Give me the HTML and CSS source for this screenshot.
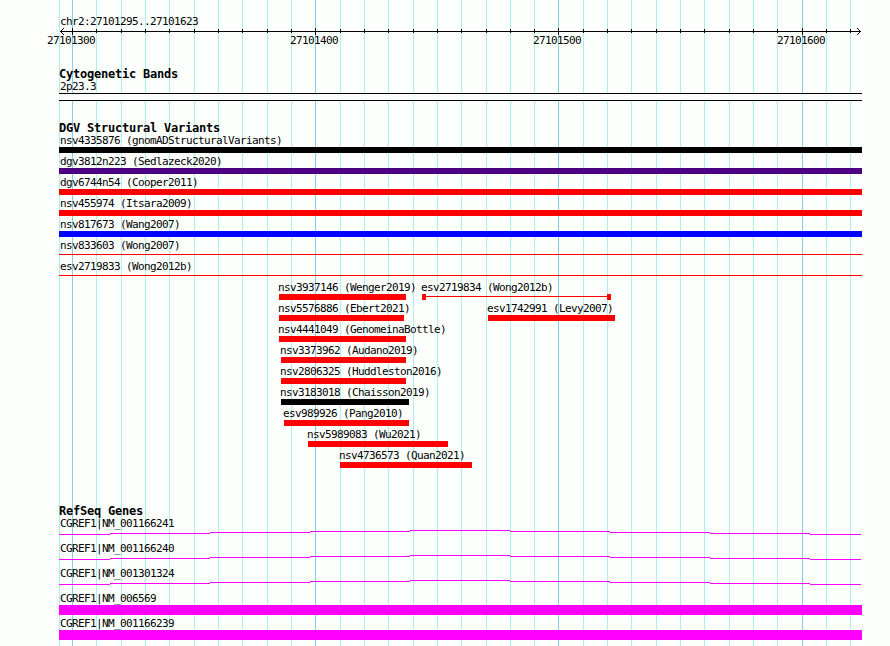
FILE: index.html
```html
<!DOCTYPE html>
<html lang="en">
<head>
<meta charset="utf-8">
<title>chr2:27101295..27101623</title>
<link rel="stylesheet" href="styles.css">
</head>
<body>
<main class="browser">
  <svg class="gridlines" width="890" height="646" aria-hidden="true">
    <path class="minor" d="M59.5 0V646M96.5 0V646M121.5 0V646M145.5 0V646M169.5 0V646M194.5 0V646M218.5 0V646M242.5 0V646M267.5 0V646M291.5 0V646M340.5 0V646M364.5 0V646M388.5 0V646M413.5 0V646M437.5 0V646M461.5 0V646M486.5 0V646M510.5 0V646M534.5 0V646M583.5 0V646M607.5 0V646M631.5 0V646M656.5 0V646M680.5 0V646M704.5 0V646M729.5 0V646M753.5 0V646M777.5 0V646M826.5 0V646M850.5 0V646"/>
    <path class="major" d="M72.5 0V646M315.5 0V646M558.5 0V646M802.5 0V646"/>
  </svg>

  <header class="ruler">
    <div class="label wide">chr2:27101295..27101623</div>
    <svg class="axis" width="890" height="7" aria-hidden="true">
      <path d="M60 3.5H861M72.5 0V7M315.5 0V7M558.5 0V7M802.5 0V7"/>
      <path d="M96.5 1V5M121.5 1V5M145.5 1V5M169.5 1V5M194.5 1V5M218.5 1V5M242.5 1V5M267.5 1V5M291.5 1V5M340.5 1V5M364.5 1V5M388.5 1V5M413.5 1V5M437.5 1V5M461.5 1V5M486.5 1V5M510.5 1V5M534.5 1V5M583.5 1V5M607.5 1V5M631.5 1V5M656.5 1V5M680.5 1V5M704.5 1V5M729.5 1V5M753.5 1V5M777.5 1V5M826.5 1V5M850.5 1V5"/>
      <path d="M61 2.5H62M62 1.5H63M63 0.5H64M61 4.5H62M62 5.5H63M63 6.5H64M859 2.5H860M858 1.5H859M857 0.5H858M859 4.5H860M858 5.5H859M857 6.5H858"/>
    </svg>
    <div class="ticks">
      <span class="label tick" style="--x:47px">27101300</span>
      <span class="label tick" style="--x:290px">27101400</span>
      <span class="label tick" style="--x:533px">27101500</span>
      <span class="label tick" style="--x:777px">27101600</span>
    </div>
  </header>

  <section class="track cytobands">
    <h2>Cytogenetic Bands</h2>
    <div class="label wide">2p23.3</div>
    <div class="band"></div>
  </section>

  <section class="track variants">
    <h2>DGV Structural Variants</h2>
    <div class="row"><div class="full"><div class="label">nsv4335876 (gnomADStructuralVariants)</div><div class="bar black"></div></div></div>
    <div class="row"><div class="full"><div class="label">dgv3812n223 (Sedlazeck2020)</div><div class="bar indigo"></div></div></div>
    <div class="row"><div class="full"><div class="label">dgv6744n54 (Cooper2011)</div><div class="bar"></div></div></div>
    <div class="row"><div class="full"><div class="label">nsv455974 (Itsara2009)</div><div class="bar"></div></div></div>
    <div class="row"><div class="full"><div class="label">nsv817673 (Wang2007)</div><div class="bar blue"></div></div></div>
    <div class="row"><div class="full"><div class="label">nsv833603 (Wong2007)</div><div class="bar thin"></div></div></div>
    <div class="row"><div class="full"><div class="label">esv2719833 (Wong2012b)</div><div class="bar thin"></div></div></div>
    <div class="row">
      <div class="feature" style="--x:279px;--w:127px"><div class="label">nsv3937146 (Wenger2019)</div><div class="bar"></div></div>
      <div class="feature" style="--x:422px;--w:189px"><div class="label">esv2719834 (Wong2012b)</div><div class="bar thin capped"></div></div>
    </div>
    <div class="row">
      <div class="feature" style="--x:279px;--w:125px"><div class="label">nsv5576886 (Ebert2021)</div><div class="bar"></div></div>
      <div class="feature" style="--x:488px;--w:127px"><div class="label">esv1742991 (Levy2007)</div><div class="bar"></div></div>
    </div>
    <div class="row"><div class="feature" style="--x:279px;--w:127px"><div class="label">nsv4441049 (GenomeinaBottle)</div><div class="bar"></div></div></div>
    <div class="row"><div class="feature" style="--x:281px;--w:125px"><div class="label">nsv3373962 (Audano2019)</div><div class="bar"></div></div></div>
    <div class="row"><div class="feature" style="--x:281px;--w:125px"><div class="label">nsv2806325 (Huddleston2016)</div><div class="bar"></div></div></div>
    <div class="row"><div class="feature" style="--x:281px;--w:128px"><div class="label">nsv3183018 (Chaisson2019)</div><div class="bar black"></div></div></div>
    <div class="row"><div class="feature" style="--x:284px;--w:125px"><div class="label">esv989926 (Pang2010)</div><div class="bar"></div></div></div>
    <div class="row"><div class="feature" style="--x:308px;--w:140px"><div class="label">nsv5989083 (Wu2021)</div><div class="bar"></div></div></div>
    <div class="row"><div class="feature" style="--x:340px;--w:132px"><div class="label">nsv4736573 (Quan2021)</div><div class="bar"></div></div></div>
  </section>

  <section class="track genes">
    <h2>RefSeq Genes</h2>
    <div class="gene"><div class="label">CGREF1|NM_001166241</div>
      <svg class="intron" width="803" height="5"><path d="M0 4.5H51M51 3.5H151M151 2.5H251M251 1.5H351M351 .5H451M451 1.5H551M551 2.5H651M651 3.5H751M751 4.5H802"/></svg></div>
    <div class="gene"><div class="label">CGREF1|NM_001166240</div>
      <svg class="intron" width="803" height="5"><path d="M0 4.5H51M51 3.5H151M151 2.5H251M251 1.5H351M351 .5H451M451 1.5H551M551 2.5H651M651 3.5H751M751 4.5H802"/></svg></div>
    <div class="gene"><div class="label">CGREF1|NM_001301324</div>
      <svg class="intron" width="803" height="5"><path d="M0 4.5H51M51 3.5H151M151 2.5H251M251 1.5H351M351 .5H451M451 1.5H551M551 2.5H651M651 3.5H751M751 4.5H802"/></svg></div>
    <div class="gene"><div class="label">CGREF1|NM_006569</div><div class="exon"></div></div>
    <div class="gene"><div class="label">CGREF1|NM_001166239</div><div class="exon"></div></div>
  </section>
</main>
</body>
</html>
```
FILE: styles.css
```css
* { box-sizing: border-box; }

body {
  margin: 0;
  background: #fdfffc;
  color: #000;
}

.browser {
  position: relative;
  width: 890px;
  height: 646px;
  padding-top: 15px;
  overflow: hidden;
  isolation: isolate;
}

.gridlines {
  position: absolute;
  inset: 0;
  z-index: -1;
}

.minor { stroke: #afeeee; }
.major { stroke: #87ceeb; }

.label {
  height: 13px;
  font: 11px/13px "DejaVu Sans Mono", monospace;
  letter-spacing: -0.62px;
  white-space: pre;
}

.wide { margin-left: 60px; }

h2 {
  height: 13px;
  margin: 0 0 0 59px;
  font: bold 12px/14px "DejaVu Sans Mono", monospace;
  letter-spacing: -0.22px;
  white-space: pre;
}

.axis {
  display: block;
  stroke: #000;
}

.ticks {
  display: grid;
  margin-top: -1px;
}

.tick {
  grid-area: 1 / 1;
  margin-left: var(--x);
}

.cytobands { margin-top: 20px; }

.band {
  width: 803px;
  height: 8px;
  margin-left: 59px;
  background: #fdfffc;
  border: solid #000;
  border-width: 1px 0;
}

.variants { margin-top: 20px; }

.row {
  display: grid;
  height: 21px;
}

.full {
  width: 803px;
  margin-left: 59px;
}

.full .label { margin-left: 1px; }

.feature {
  grid-area: 1 / 1;
  width: var(--w);
  margin-left: var(--x);
}

.feature .label { margin-left: -1px; }

.bar {
  height: 6px;
  background: #f00;
}

.black { background: #000; }
.indigo { background: #4b0082; }
.blue { background: #00f; }

.thin {
  height: 6px;
  background: linear-gradient(#f00, #f00) 0 2px / 100% 1px no-repeat;
}

.capped {
  border: solid #f00;
  border-width: 0 4px;
}

.genes { margin-top: 34px; }

.gene {
  width: 803px;
  height: 25px;
  margin-left: 59px;
}

.gene .label { margin-left: 1px; }

.intron {
  display: block;
  stroke: #f0f;
}

.exon {
  height: 10px;
  background: #f0f;
}
```
